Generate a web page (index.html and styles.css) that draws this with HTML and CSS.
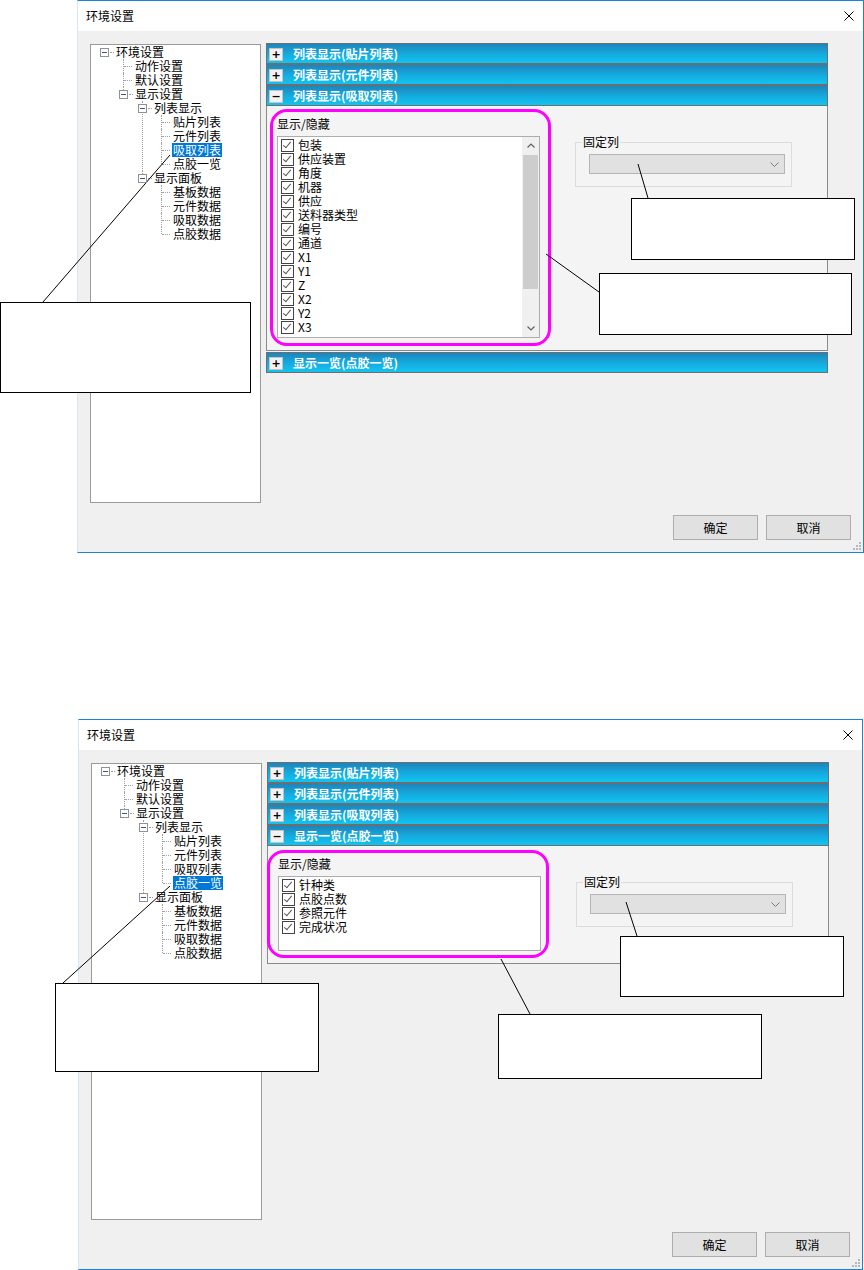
FILE: index.html
```html
<!DOCTYPE html>
<html lang="zh-CN">
<head>
    <meta charset="UTF-8">
    <meta name="viewport" content="width=device-width, initial-scale=1.0">
    <title>环境设置</title>
    <link rel="stylesheet" href="styles.css">
</head>
<body>
<div class="page">

    <!-- dialog 1: 列表显示(吸取列表) -->
    <div class="dialog first">
        <div class="titlebar">
            <span class="title">环境设置</span>
            <svg class="close" width="10" height="10" viewBox="0 0 10 10"><path d="M0.5 0.5L9.5 9.5M9.5 0.5L0.5 9.5" stroke="#000" stroke-width="1"/></svg>
        </div>
        <div class="dlg-body">
            <div class="main">
                <div class="tree-box">
                    <ul class="tree">
                        <li><div class="node"><span class="gut"><i class="exp"></i><i class="dash"></i></span><span class="label">环境设置</span></div>
                            <ul>
                                <li><div class="node"><span class="gut"><i class="dash leaf"></i></span><span class="label">动作设置</span></div></li>
                                <li><div class="node"><span class="gut"><i class="dash leaf"></i></span><span class="label">默认设置</span></div></li>
                                <li><div class="node"><span class="gut"><i class="exp"></i><i class="dash"></i></span><span class="label">显示设置</span></div>
                                    <ul>
                                        <li><div class="node"><span class="gut"><i class="exp"></i><i class="dash"></i></span><span class="label">列表显示</span></div>
                                            <ul>
                                                <li><div class="node"><span class="gut"><i class="dash leaf"></i></span><span class="label">贴片列表</span></div></li>
                                                <li><div class="node"><span class="gut"><i class="dash leaf"></i></span><span class="label">元件列表</span></div></li>
                                                <li><div class="node"><span class="gut"><i class="dash leaf"></i></span><span class="label sel">吸取列表</span></div></li>
                                                <li><div class="node"><span class="gut"><i class="dash leaf"></i></span><span class="label">点胶一览</span></div></li>
                                            </ul>
                                        </li>
                                        <li><div class="node"><span class="gut"><i class="exp"></i><i class="dash"></i></span><span class="label">显示面板</span></div>
                                            <ul>
                                                <li><div class="node"><span class="gut"><i class="dash leaf"></i></span><span class="label">基板数据</span></div></li>
                                                <li><div class="node"><span class="gut"><i class="dash leaf"></i></span><span class="label">元件数据</span></div></li>
                                                <li><div class="node"><span class="gut"><i class="dash leaf"></i></span><span class="label">吸取数据</span></div></li>
                                                <li><div class="node"><span class="gut"><i class="dash leaf"></i></span><span class="label">点胶数据</span></div></li>
                                            </ul>
                                        </li>
                                    </ul>
                                </li>
                            </ul>
                        </li>
                    </ul>
                </div>
                <div class="panels">
                    <div class="bar"><span class="toggle">+</span><span class="bar-title">列表显示(贴片列表)</span></div>
                    <div class="bar"><span class="toggle">+</span><span class="bar-title">列表显示(元件列表)</span></div>
                    <div class="bar"><span class="toggle">−</span><span class="bar-title">列表显示(吸取列表)</span></div>
                    <div class="panel-body">
                        <div class="col-list">
                            <div class="cap">显示/隐藏</div>
                            <div class="list tall">
                                <div class="items">
                                    <div class="item"><span class="chk"></span>包装</div>
                                    <div class="item"><span class="chk"></span>供应装置</div>
                                    <div class="item"><span class="chk"></span>角度</div>
                                    <div class="item"><span class="chk"></span>机器</div>
                                    <div class="item"><span class="chk"></span>供应</div>
                                    <div class="item"><span class="chk"></span>送料器类型</div>
                                    <div class="item"><span class="chk"></span>编号</div>
                                    <div class="item"><span class="chk"></span>通道</div>
                                    <div class="item"><span class="chk"></span>X1</div>
                                    <div class="item"><span class="chk"></span>Y1</div>
                                    <div class="item"><span class="chk"></span>Z</div>
                                    <div class="item"><span class="chk"></span>X2</div>
                                    <div class="item"><span class="chk"></span>Y2</div>
                                    <div class="item"><span class="chk"></span>X3</div>
                                </div>
                                <div class="scrollbar">
                                    <div class="sb-btn"><svg width="8" height="5" viewBox="0 0 8 5"><path d="M0.5 4.5L4 1L7.5 4.5" stroke="#606060" stroke-width="1.2" fill="none"/></svg></div>
                                    <div class="sb-thumb"></div>
                                    <div class="sb-track"></div>
                                    <div class="sb-btn"><svg width="8" height="5" viewBox="0 0 8 5"><path d="M0.5 0.5L4 4L7.5 0.5" stroke="#606060" stroke-width="1.2" fill="none"/></svg></div>
                                </div>
                            </div>
                        </div>
                        <fieldset class="group">
                            <legend>固定列</legend>
                            <div class="combo"><svg width="9" height="5" viewBox="0 0 9 5"><path d="M0.5 0.5L4.5 4.5L8.5 0.5" stroke="#7a7a7a" fill="none"/></svg></div>
                        </fieldset>
                    </div>
                    <div class="bar"><span class="toggle">+</span><span class="bar-title">显示一览(点胶一览)</span></div>
                </div>
            </div>
            <div class="buttons">
                <button class="btn">确定</button>
                <button class="btn">取消</button>
            </div>
        </div>
        <svg class="grip" width="8" height="8" viewBox="0 0 8 8" fill="#b8b8b8"><rect x="6" y="0" width="2" height="2"/><rect x="3" y="3" width="2" height="2"/><rect x="6" y="3" width="2" height="2"/><rect x="0" y="6" width="2" height="2"/><rect x="3" y="6" width="2" height="2"/><rect x="6" y="6" width="2" height="2"/></svg>
    </div>

    <!-- dialog 2: 显示一览(点胶一览) -->
    <div class="dialog second">
        <div class="titlebar">
            <span class="title">环境设置</span>
            <svg class="close" width="10" height="10" viewBox="0 0 10 10"><path d="M0.5 0.5L9.5 9.5M9.5 0.5L0.5 9.5" stroke="#000" stroke-width="1"/></svg>
        </div>
        <div class="dlg-body">
            <div class="main">
                <div class="tree-box">
                    <ul class="tree">
                        <li><div class="node"><span class="gut"><i class="exp"></i><i class="dash"></i></span><span class="label">环境设置</span></div>
                            <ul>
                                <li><div class="node"><span class="gut"><i class="dash leaf"></i></span><span class="label">动作设置</span></div></li>
                                <li><div class="node"><span class="gut"><i class="dash leaf"></i></span><span class="label">默认设置</span></div></li>
                                <li><div class="node"><span class="gut"><i class="exp"></i><i class="dash"></i></span><span class="label">显示设置</span></div>
                                    <ul>
                                        <li><div class="node"><span class="gut"><i class="exp"></i><i class="dash"></i></span><span class="label">列表显示</span></div>
                                            <ul>
                                                <li><div class="node"><span class="gut"><i class="dash leaf"></i></span><span class="label">贴片列表</span></div></li>
                                                <li><div class="node"><span class="gut"><i class="dash leaf"></i></span><span class="label">元件列表</span></div></li>
                                                <li><div class="node"><span class="gut"><i class="dash leaf"></i></span><span class="label">吸取列表</span></div></li>
                                                <li><div class="node"><span class="gut"><i class="dash leaf"></i></span><span class="label sel">点胶一览</span></div></li>
                                            </ul>
                                        </li>
                                        <li><div class="node"><span class="gut"><i class="exp"></i><i class="dash"></i></span><span class="label">显示面板</span></div>
                                            <ul>
                                                <li><div class="node"><span class="gut"><i class="dash leaf"></i></span><span class="label">基板数据</span></div></li>
                                                <li><div class="node"><span class="gut"><i class="dash leaf"></i></span><span class="label">元件数据</span></div></li>
                                                <li><div class="node"><span class="gut"><i class="dash leaf"></i></span><span class="label">吸取数据</span></div></li>
                                                <li><div class="node"><span class="gut"><i class="dash leaf"></i></span><span class="label">点胶数据</span></div></li>
                                            </ul>
                                        </li>
                                    </ul>
                                </li>
                            </ul>
                        </li>
                    </ul>
                </div>
                <div class="panels">
                    <div class="bar"><span class="toggle">+</span><span class="bar-title">列表显示(贴片列表)</span></div>
                    <div class="bar"><span class="toggle">+</span><span class="bar-title">列表显示(元件列表)</span></div>
                    <div class="bar"><span class="toggle">+</span><span class="bar-title">列表显示(吸取列表)</span></div>
                    <div class="bar"><span class="toggle">−</span><span class="bar-title">显示一览(点胶一览)</span></div>
                    <div class="panel-body">
                        <div class="col-list">
                            <div class="cap">显示/隐藏</div>
                            <div class="list short">
                                <div class="items">
                                    <div class="item"><span class="chk"></span>针种类</div>
                                    <div class="item"><span class="chk"></span>点胶点数</div>
                                    <div class="item"><span class="chk"></span>参照元件</div>
                                    <div class="item"><span class="chk"></span>完成状况</div>
                                </div>
                            </div>
                        </div>
                        <fieldset class="group">
                            <legend>固定列</legend>
                            <div class="combo"><svg width="9" height="5" viewBox="0 0 9 5"><path d="M0.5 0.5L4.5 4.5L8.5 0.5" stroke="#7a7a7a" fill="none"/></svg></div>
                        </fieldset>
                    </div>
                </div>
            </div>
            <div class="buttons">
                <button class="btn">确定</button>
                <button class="btn">取消</button>
            </div>
        </div>
        <svg class="grip" width="8" height="8" viewBox="0 0 8 8" fill="#b8b8b8"><rect x="6" y="0" width="2" height="2"/><rect x="3" y="3" width="2" height="2"/><rect x="6" y="3" width="2" height="2"/><rect x="0" y="6" width="2" height="2"/><rect x="3" y="6" width="2" height="2"/><rect x="6" y="6" width="2" height="2"/></svg>
    </div>

    <!-- annotation layer: highlight rings, leader lines, empty callouts -->
    <div class="ring r1"></div>
    <div class="ring r2"></div>
    <svg class="leaders" width="864" height="1270" viewBox="0 0 864 1270">
        <g stroke="#000" stroke-width="1">
            <line x1="638" y1="164" x2="648" y2="198"/>
            <line x1="546" y1="254" x2="599" y2="292"/>
            <line x1="170" y1="155" x2="43" y2="302"/>
            <line x1="626" y1="902" x2="637" y2="936"/>
            <line x1="501" y1="959" x2="530" y2="1014"/>
            <line x1="170" y1="886" x2="63" y2="983"/>
        </g>
    </svg>
    <div class="note n1"></div>
    <div class="note n2"></div>
    <div class="note n3"></div>
    <div class="note n4"></div>
    <div class="note n5"></div>
    <div class="note n6"></div>
</div>
</body>
</html>
```

FILE: styles.css
```css
body {
    margin: 0;
    background: #fff;
    font-family: "Noto Sans CJK SC", "Liberation Sans", sans-serif;
    font-size: 12px;
    color: #000;
}
.page {
    position: relative;
    width: 864px;
    height: 1270px;
    overflow: hidden;
}

/* window frame */
.dialog {
    position: relative;
    box-sizing: border-box;
    border: 1px solid #1883d7;
    border-left-color: #d6e6f5;
    background: #f0f0f0;
}
.dialog.first {
    margin-left: 77px;
    width: 787px;
    height: 553px;
}
.dialog.second {
    margin-top: 166px;
    margin-left: 78px;
    width: 785px;
    height: 551px;
}
.titlebar {
    height: 30px;
    background: #fff;
    display: flex;
    align-items: center;
    justify-content: space-between;
    padding: 0 9px 0 8px;
}
.title {
    line-height: 14px;
}
.dlg-body {
    padding: 13px 12px 12px 12px;
}
.main {
    display: flex;
    gap: 5px;
}
.first .main {
    height: 459px;
}
.second .main {
    height: 457px;
}

/* tree view */
.tree-box {
    flex: none;
    width: 171px;
    box-sizing: border-box;
    border: 1px solid #9a9a9a;
    background: #fff;
}
.tree, .tree ul {
    list-style: none;
    margin: 0;
    padding: 0;
}
.tree ul {
    margin-left: 19px;
}
.tree li {
    position: relative;
}
.tree ul > li::before {
    content: "";
    position: absolute;
    left: 13px;
    top: 0;
    bottom: 0;
    border-left: 1px dotted #a0a0a0;
}
.tree ul > li:last-child::before {
    bottom: auto;
    height: 7px;
}
.node {
    display: flex;
    align-items: center;
    height: 14px;
}
.gut {
    flex: none;
    width: 24px;
    height: 14px;
    display: flex;
    align-items: center;
}
.exp {
    position: relative;
    z-index: 1;
    box-sizing: border-box;
    width: 9px;
    height: 9px;
    margin-left: 9px;
    border: 1px solid #919191;
    background: #fff;
}
.exp::after {
    content: "";
    position: absolute;
    left: 1px;
    top: 3px;
    width: 5px;
    height: 1px;
    background: #34558f;
}
.dash {
    height: 0;
    border-top: 1px dotted #a0a0a0;
}
.exp + .dash {
    margin-left: 1px;
    width: 4px;
}
.dash.leaf {
    margin-left: 14px;
    width: 8px;
}
.label {
    padding: 0 1px;
    line-height: 14px;
    white-space: nowrap;
}
.label.sel {
    background: #0078d7;
    color: #fff;
}

/* collapsible panels */
.panels {
    flex: none;
    width: 562px;
    margin-top: -1px;
}
.bar {
    box-sizing: border-box;
    height: 21px;
    border: 1px solid #6e6e6e;
    background: linear-gradient(#1c85bb, #15ace0 55%, #10c4f0);
    display: flex;
    align-items: center;
    color: #fff;
    font-weight: bold;
}
.toggle {
    box-sizing: border-box;
    width: 14px;
    height: 13px;
    margin: 1px 10px 0 2px;
    border: 1px solid #c4c4c4;
    background: #f2f2f2;
    color: #000;
    font: bold 11px/11px "DejaVu Sans", sans-serif;
    text-align: center;
}
.bar-title {
    line-height: 14px;
    white-space: nowrap;
}
.panel-body {
    box-sizing: border-box;
    border: 1px solid #8a8a8a;
    border-top: 0;
    background: #f4f4f4;
    padding: 11px 10px 12px 10px;
    display: flex;
    align-items: flex-start;
    gap: 35px;
}
.panel-body + .bar {
    margin-top: 1px;
}
.cap {
    line-height: 14px;
}

/* checked list box */
.list {
    margin-top: 5px;
    box-sizing: border-box;
    width: 263px;
    border: 1px solid #adadad;
    background: #fff;
    display: flex;
}
.list.tall {
    height: 202px;
}
.list.short {
    height: 75px;
}
.items {
    flex: 1;
    padding: 1px 0 0 3px;
}
.item {
    display: flex;
    align-items: center;
    height: 14px;
    line-height: 14px;
    white-space: nowrap;
}
.chk {
    position: relative;
    flex: none;
    box-sizing: border-box;
    width: 13px;
    height: 13px;
    margin-right: 4px;
    border: 1px solid #444;
    background: #fff;
}
.chk::after {
    content: "";
    position: absolute;
    left: 3px;
    top: 0;
    width: 3px;
    height: 7px;
    border: solid #555;
    border-width: 0 1.5px 1.5px 0;
    transform: rotate(40deg);
}
.scrollbar {
    flex: none;
    width: 17px;
    background: #f0f0f0;
    display: flex;
    flex-direction: column;
}
.sb-btn {
    height: 17px;
    display: flex;
    align-items: center;
    justify-content: center;
}
.sb-thumb {
    height: 134px;
    margin: 1px 1px 0;
    background: #cdcdcd;
}
.sb-track {
    flex: 1;
}

/* 固定列 group */
.group {
    min-width: 0;
    margin: 18px 0 0;
    padding: 0 6px 12px 6px;
    width: 217px;
    box-sizing: border-box;
    border: 1px solid #dcdcdc;
}
.group legend {
    padding: 0 1px;
    line-height: 14px;
}
.combo {
    margin: 5px 0 0 7px;
    box-sizing: border-box;
    width: 196px;
    height: 20px;
    border: 1px solid #b5b5b5;
    background: #e1e1e1;
    display: flex;
    align-items: center;
    justify-content: flex-end;
    padding-right: 5px;
}

/* buttons */
.buttons {
    display: flex;
    justify-content: flex-end;
    gap: 8px;
    margin-top: 12px;
}
.btn {
    box-sizing: border-box;
    width: 85px;
    height: 25px;
    padding: 0;
    border: 1px solid #adadad;
    background: #e1e1e1;
    font: 12px "Noto Sans CJK SC", sans-serif;
    color: #000;
}
.grip {
    position: absolute;
    right: 2px;
    bottom: 2px;
}

/* annotations */
.ring {
    position: absolute;
    box-sizing: border-box;
    border: 3px solid #ff00ff;
    border-radius: 17px;
}
.r1 {
    left: 270px;
    top: 109px;
    width: 281px;
    height: 237px;
}
.r2 {
    left: 267px;
    top: 850px;
    width: 282px;
    height: 108px;
}
.leaders {
    position: absolute;
    left: 0;
    top: 0;
}
.note {
    position: absolute;
    box-sizing: border-box;
    border: 1px solid #000;
    background: #fff;
}
.n1 { left: 631px; top: 198px; width: 224px; height: 62px; }
.n2 { left: 599px; top: 273px; width: 253px; height: 62px; }
.n3 { left: 0; top: 302px; width: 251px; height: 91px; }
.n4 { left: 620px; top: 936px; width: 224px; height: 61px; }
.n5 { left: 498px; top: 1014px; width: 264px; height: 65px; }
.n6 { left: 55px; top: 983px; width: 264px; height: 89px; }
```
